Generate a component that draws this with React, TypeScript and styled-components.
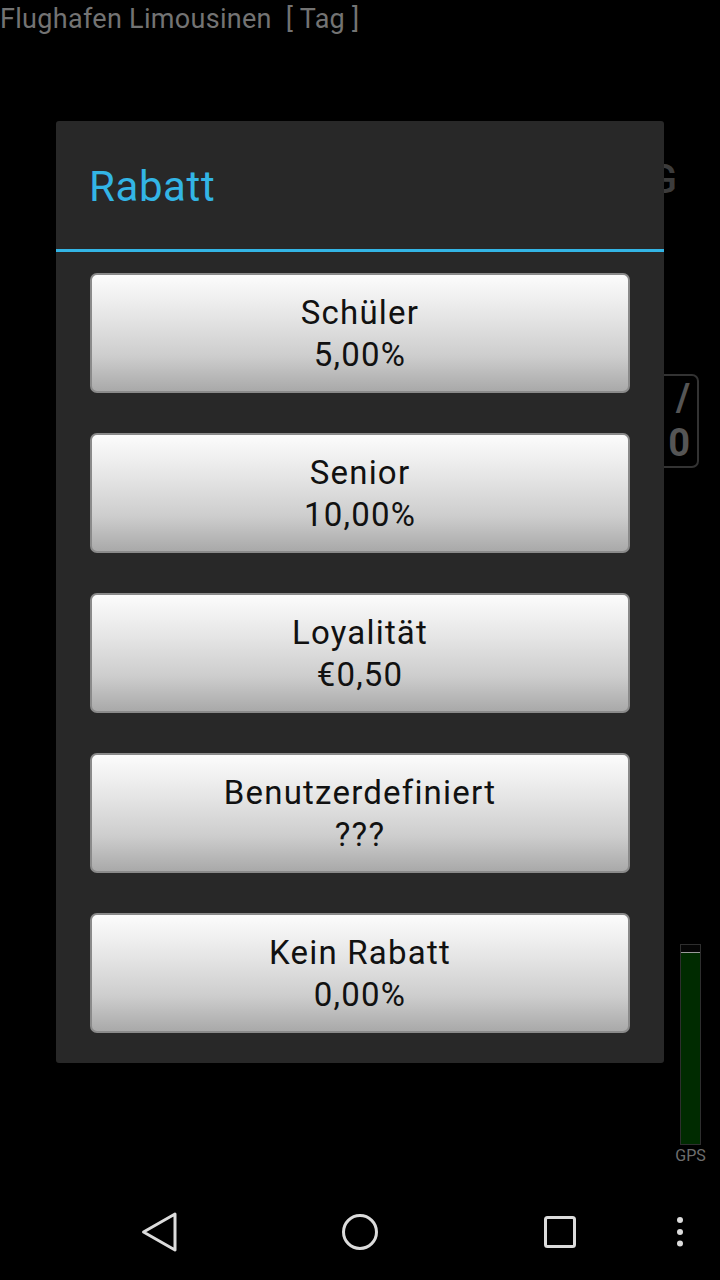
import styled, { createGlobalStyle } from "styled-components";

const GlobalStyle = createGlobalStyle`
  html, body {
    margin: 0;
    padding: 0;
    background: #000;
  }
  body {
    font-family: Roboto, "Noto Sans", sans-serif;
  }
`;

const discounts = [
  { name: "Schüler", value: "5,00%" },
  { name: "Senior", value: "10,00%" },
  { name: "Loyalität", value: "€0,50" },
  { name: "Benutzerdefiniert", value: "???" },
  { name: "Kein Rabatt", value: "0,00%" },
];

export default function App() {
  return (
    <>
      <GlobalStyle />
      <Screen>
        <AppTitle>Flughafen Limousinen&nbsp;&nbsp;[ Tag ]</AppTitle>

        <Body>
          <SideColumn>
            <BigLetter>G</BigLetter>
            <ValueBox>
              <ValueLine>/</ValueLine>
              <ValueLine>0</ValueLine>
            </ValueBox>
            <Spacer />
            <Meter>
              <MeterBar>
                <MeterFill />
              </MeterBar>
              <MeterLabel>GPS</MeterLabel>
            </Meter>
          </SideColumn>
        </Body>

        <NavBar>
          <NavButton $left={136}>
            <svg width="48" height="48" viewBox="0 0 48 48">
              <path d="M39 6 L7.5 24 L39 42 Z" fill="none" stroke="#dcdcdc" strokeWidth="3" strokeLinejoin="round" />
            </svg>
          </NavButton>
          <NavButton $left={152}>
            <svg width="48" height="48" viewBox="0 0 48 48">
              <circle cx="24" cy="24" r="16.5" fill="none" stroke="#dcdcdc" strokeWidth="3" />
            </svg>
          </NavButton>
          <NavButton $left={152}>
            <svg width="48" height="48" viewBox="0 0 48 48">
              <rect x="9.5" y="9.5" width="29" height="29" rx="2" fill="none" stroke="#dcdcdc" strokeWidth="3" />
            </svg>
          </NavButton>
          <NavButton $left={72}>
            <svg width="48" height="48" viewBox="0 0 48 48">
              <circle cx="24" cy="12" r="3" fill="#dcdcdc" />
              <circle cx="24" cy="24" r="3" fill="#dcdcdc" />
              <circle cx="24" cy="35.5" r="3" fill="#dcdcdc" />
            </svg>
          </NavButton>
        </NavBar>

        <Overlay>
          <Dialog>
            <DialogHeader>
              <DialogTitle>Rabatt</DialogTitle>
            </DialogHeader>
            <Divider />
            <DialogContent>
              {discounts.map((d) => (
                <OptionButton key={d.name}>
                  <span>{d.name}</span>
                  <span>{d.value}</span>
                </OptionButton>
              ))}
            </DialogContent>
          </Dialog>
        </Overlay>
      </Screen>
    </>
  );
}

const Screen = styled.div`
  position: relative;
  width: 720px;
  height: 1280px;
  background: #000;
  display: flex;
  flex-direction: column;
  overflow: hidden;
`;

const AppTitle = styled.div`
  height: 34px;
  padding-top: 2px;
  box-sizing: border-box;
  font-size: 27px;
  line-height: 34px;
  color: #737373;
  letter-spacing: 0.3px;
  white-space: nowrap;
`;

const Body = styled.div`
  flex: 1;
  display: flex;
  justify-content: flex-end;
`;

const SideColumn = styled.div`
  display: flex;
  flex-direction: column;
  align-items: flex-end;
  padding-right: 19px;
`;

const BigLetter = styled.div`
  margin-top: 126px;
  margin-right: 24px;
  font-size: 40px;
  line-height: 40px;
  font-weight: 500;
  color: #3c3c3c;
`;

const ValueBox = styled.div`
  margin-top: 174px;
  margin-right: 2px;
  width: 140px;
  height: 94px;
  box-sizing: border-box;
  border: 2px solid #333;
  border-radius: 7px;
  padding-right: 7px;
  display: flex;
  flex-direction: column;
  align-items: flex-end;
`;

const ValueLine = styled.span`
  font-size: 38px;
  line-height: 45px;
  font-weight: bold;
  color: #555;
`;

const Spacer = styled.div`
  flex: 1;
`;

const Meter = styled.div`
  width: 21px;
  display: flex;
  flex-direction: column;
  align-items: center;
  margin-bottom: 18px;
`;

const MeterBar = styled.div`
  width: 21px;
  height: 201px;
  box-sizing: border-box;
  border: 1px solid #2e2e2e;
  background: #050505;
  padding-top: 7px;
  display: flex;
`;

const MeterFill = styled.div`
  flex: 1;
  background: #002b00;
  border-top: 1px solid #9a9a9a;
`;

const MeterLabel = styled.div`
  margin-top: 1px;
  font-size: 16px;
  line-height: 20px;
  color: #6e6e6e;
  white-space: nowrap;
`;

const NavBar = styled.div`
  height: 96px;
  display: flex;
  align-items: center;
`;

const NavButton = styled.div<{ $left: number }>`
  width: 48px;
  height: 48px;
  margin-left: ${(p) => p.$left}px;
  display: flex;
`;

const Overlay = styled.div`
  position: absolute;
  left: 0;
  right: 0;
  top: 0;
  bottom: 96px;
  display: flex;
  align-items: center;
  justify-content: center;
`;

const Dialog = styled.div`
  width: 608px;
  background: #282828;
  border-radius: 3px;
  display: flex;
  flex-direction: column;
  margin-top: -1px;
`;

const DialogHeader = styled.div`
  height: 128px;
  display: flex;
  align-items: center;
  padding-left: 33px;
`;

const DialogTitle = styled.div`
  font-size: 42px;
  line-height: 50px;
  letter-spacing: 0.6px;
  color: #33b5e5;
  margin-top: 4px;
`;

const Divider = styled.div`
  height: 3px;
  background: #33b5e5;
`;

const DialogContent = styled.div`
  display: flex;
  flex-direction: column;
  gap: 40px;
  padding: 21px 34px 30px;
`;

const OptionButton = styled.div`
  height: 120px;
  box-sizing: border-box;
  border: 2px solid #8a8a8a;
  border-radius: 7px;
  background: linear-gradient(
    to bottom,
    #fcfcfc 0%,
    #e6e6e6 35%,
    #cdcdcd 70%,
    #a9a9a9 100%
  );
  display: flex;
  flex-direction: column;
  align-items: center;
  justify-content: center;
  padding-top: 2px;
  font-size: 33px;
  line-height: 42px;
  letter-spacing: 1.2px;
  color: #111;
`;
